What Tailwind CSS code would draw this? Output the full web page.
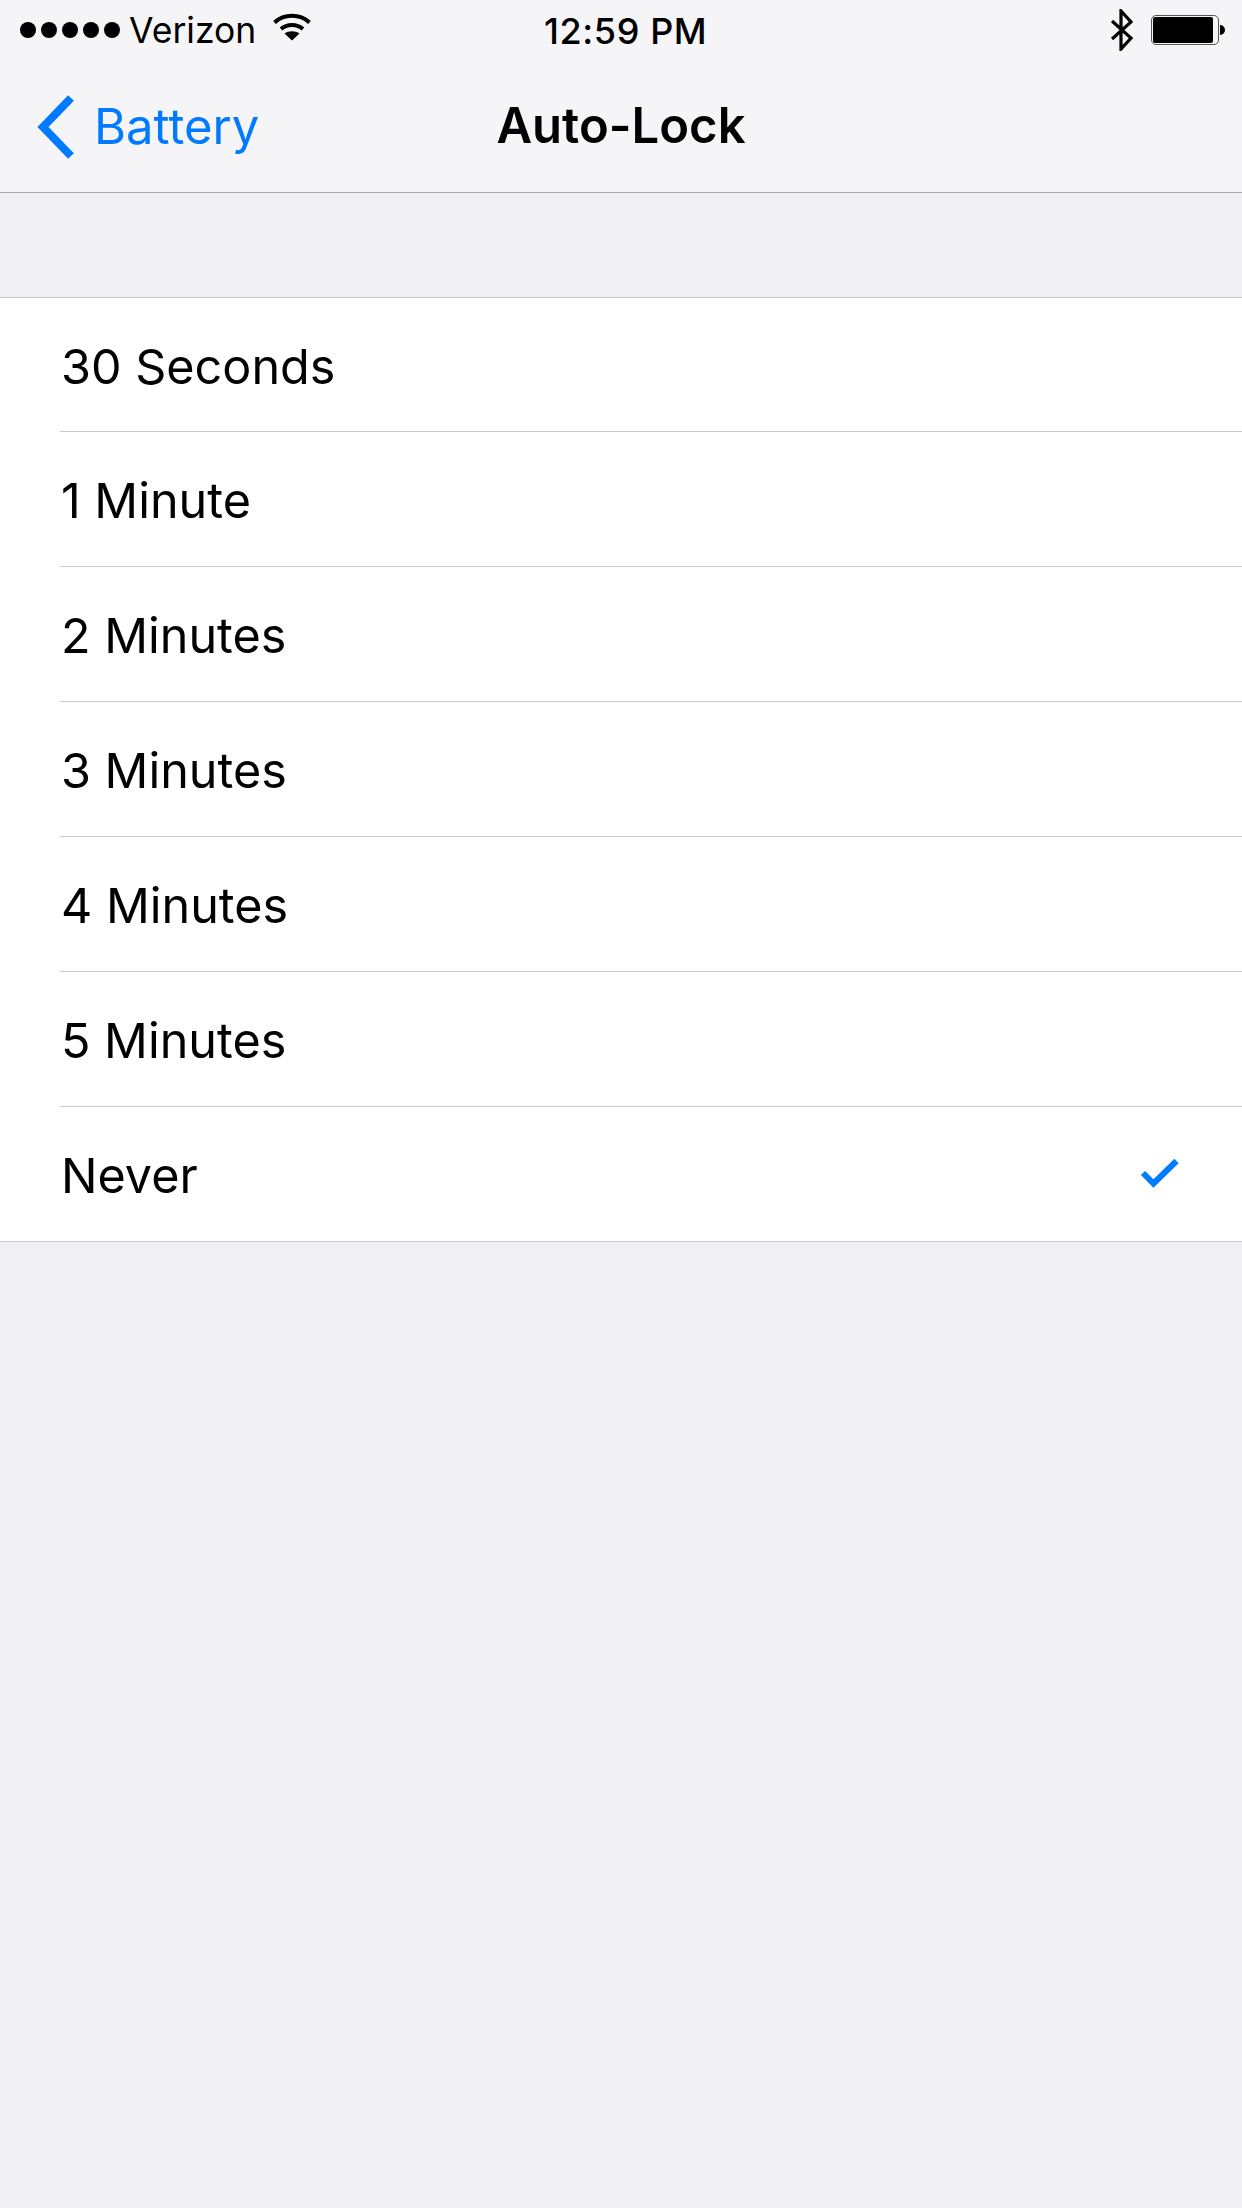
<!DOCTYPE html>
<html>
<head>
<meta charset="utf-8">
<script src="https://cdn.jsdelivr.net/npm/@tailwindcss/browser@4"></script>
</head>
<body class="m-0">
<div class="w-[1242px] h-[2208px] bg-[#efeff4] font-['Inter','Liberation_Sans',sans-serif] text-black overflow-hidden">
  <header class="h-[193px] bg-[#f5f5f8] border-b border-[#a8a8aa] flex flex-col">
    <div class="h-[60px] relative flex items-center justify-between pl-[20px] pr-[17px]">
      <div class="flex items-center">
        <div class="flex gap-[5px]">
          <span class="w-[16px] h-[16px] rounded-full bg-black"></span>
          <span class="w-[16px] h-[16px] rounded-full bg-black"></span>
          <span class="w-[16px] h-[16px] rounded-full bg-black"></span>
          <span class="w-[16px] h-[16px] rounded-full bg-black"></span>
          <span class="w-[16px] h-[16px] rounded-full bg-black"></span>
        </div>
        <span class="ml-[9px] text-[35.5px] leading-[60px] mt-[2px]">Verizon</span>
        <svg class="ml-[17px] -mt-[6px]" width="38" height="28" viewBox="0 0 38 28">
          <path d="M1.5 9.5 C11 0.5 27 0.5 36.5 9.5" fill="none" stroke="#000" stroke-width="4"/>
          <path d="M8 16 C14 10.5 24 10.5 30 16" fill="none" stroke="#000" stroke-width="4"/>
          <path d="M19 27.5 L11.5 20.5 C16 17.5 22 17.5 26.5 20.5 Z" fill="#000"/>
        </svg>
      </div>
      <span class="absolute left-[544px] top-[1px] text-[36px] leading-[60px] font-medium tracking-[0.6px]">12:59 PM</span>
      <div class="flex items-center gap-[17px]">
        <svg width="24" height="42" viewBox="0 0 24 42">
          <path d="M2 30 L21 13 L11 2 V40 L21 29 L2 12" fill="none" stroke="#000" stroke-width="3.2"/>
        </svg>
        <div class="flex items-center">
          <div class="w-[68px] h-[30px] rounded-[5px] border border-[#555] p-[1px]">
            <div class="w-[60px] h-full bg-black rounded-[2px]"></div>
          </div>
          <div class="w-[5px] h-[10px] bg-black rounded-r-[5px] ml-[1px]"></div>
        </div>
      </div>
    </div>
    <div class="flex-1 relative flex items-center justify-center">
      <div class="absolute left-[35px] top-[35px] flex items-center">
        <svg width="40" height="64" viewBox="0 0 40 64">
          <path d="M36 3 L8 32 L36 61" fill="none" stroke="#007aff" stroke-width="8"/>
        </svg>
      </div>
      <span class="absolute left-[94px] top-[33px] text-[#007aff] text-[49px] leading-[68px]">Battery</span>
      <span class="text-[49px] leading-[68px] font-semibold">Auto-Lock</span>
    </div>
  </header>
  <div class="h-[104px]"></div>
  <div class="bg-white border-y border-[#c8c7cc] pl-[60px]">
    <div class="h-[134px] border-b border-[#c8c7cc] flex items-center pl-[1px] pt-[5px] text-[48.5px]">30 Seconds</div>
    <div class="h-[135px] border-b border-[#c8c7cc] flex items-center pl-[1px] pt-[5px] text-[48.5px]">1 Minute</div>
    <div class="h-[135px] border-b border-[#c8c7cc] flex items-center pl-[1px] pt-[5px] text-[48.5px]">2 Minutes</div>
    <div class="h-[135px] border-b border-[#c8c7cc] flex items-center pl-[1px] pt-[5px] text-[48.5px]">3 Minutes</div>
    <div class="h-[135px] border-b border-[#c8c7cc] flex items-center pl-[1px] pt-[5px] text-[48.5px]">4 Minutes</div>
    <div class="h-[135px] border-b border-[#c8c7cc] flex items-center pl-[1px] pt-[5px] text-[48.5px]">5 Minutes</div>
    <div class="h-[134px] flex items-center justify-between pl-[1px] pr-[62px] text-[48.5px]">
      <span class="mt-[5px]">Never</span>
      <svg width="40" height="32" viewBox="0 0 40 32">
        <path d="M3 15 L13.5 25.5 L36.5 3" fill="none" stroke="#007aff" stroke-width="6"/>
      </svg>
    </div>
  </div>
</div>
</body>
</html>
